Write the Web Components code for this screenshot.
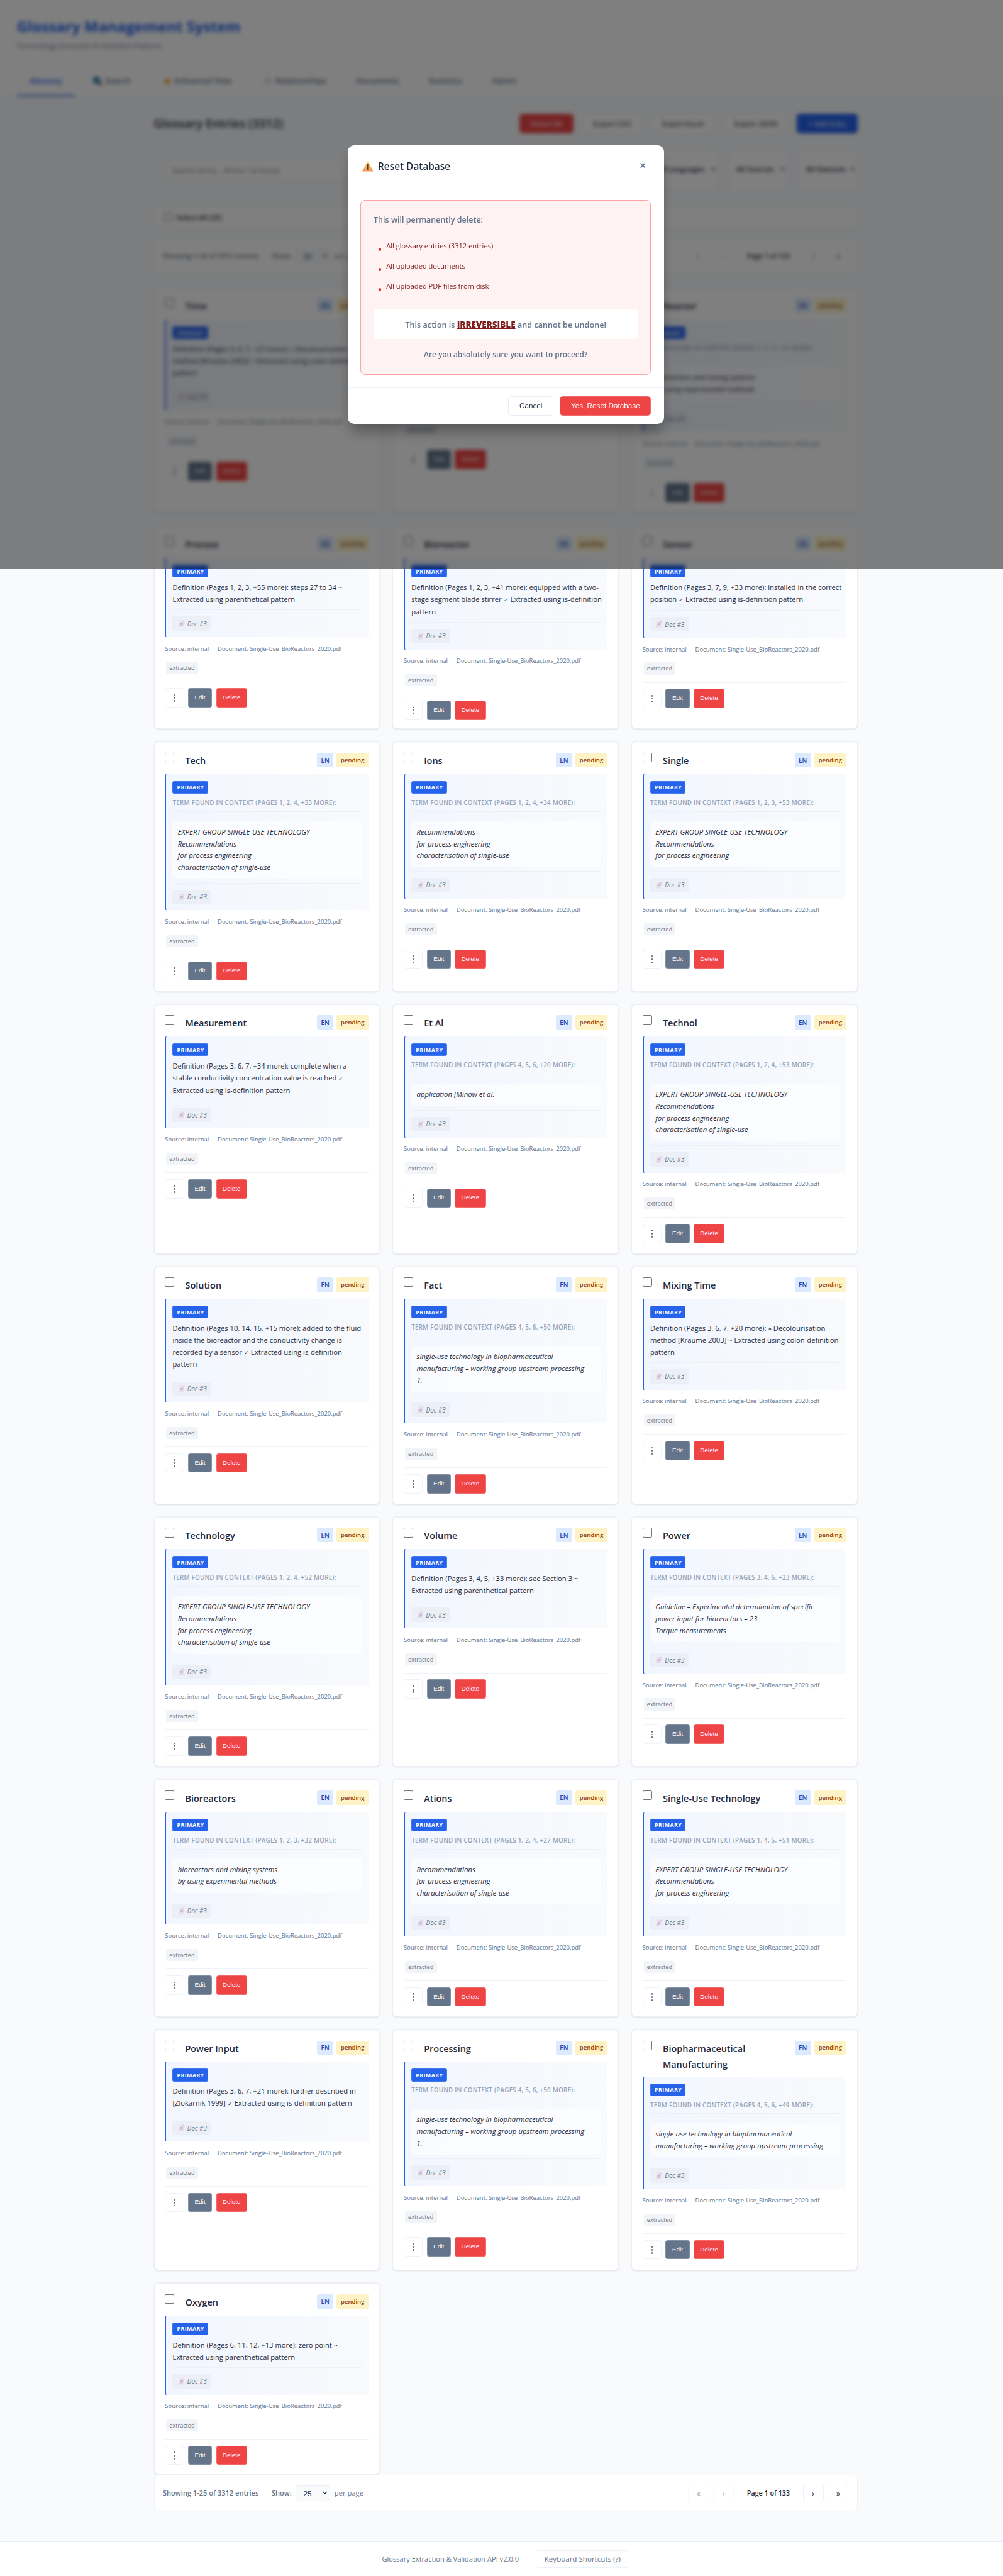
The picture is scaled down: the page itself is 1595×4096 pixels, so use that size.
<!DOCTYPE html>
<html lang="en">
<head>
<meta charset="utf-8">
<title>Glossary Management System</title>
<style>
html,body{margin:0;padding:0;background:#f8fafc}
body{width:1595px;height:4096px;overflow:hidden}
glossary-app{zoom:.83771}
</style>
</head>
<body>
<glossary-app></glossary-app>
<script>
const define = (name, html) => customElements.define(name, class extends HTMLElement {
  connectedCallback() {
    if (this.shadowRoot) return;
    const root = this.attachShadow({ mode: 'open' });
    root.innerHTML = '<style>*{box-sizing:border-box}</style>' + (typeof html === 'function' ? html(this) : html);
  }
});

/* Buttons */
define('app-button', `<style>
:host{display:flex;align-items:center;justify-content:center;box-sizing:border-box;height:37px;padding:0 20px;border-radius:6px;
 font:14px/16px "Liberation Sans",Arial,sans-serif;color:#1e293b;background:#fff;border:1px solid #e9eef8;white-space:nowrap}
:host([kind=danger]){background:#ef4444;color:#fff;border-color:#f26a6a}
:host([kind=primary]){background:#2563eb;color:#fff;border-color:#2563eb}
:host([kind=slate]){background:#64748b;color:#fff;border-color:#8390a3}
:host([size=sm]){height:36.4px;font-size:11.9px;padding:0 11px 2px;border-radius:4px}
</style><slot></slot>`);

define('kebab-button', `<style>
:host{display:flex;flex-direction:column;align-items:center;justify-content:center;gap:2.3px;box-sizing:border-box;width:36px;height:36.4px;
 padding-top:1px;border:1px solid #eef2f9;border-radius:6px;background:#fff}
i{width:3.4px;height:3.4px;border-radius:50%;background:#64748b}
</style><i></i><i></i><i></i>`);

define('check-box', `<style>
:host{display:block;box-sizing:border-box;width:18px;height:18px;border:1px solid #767676;border-radius:2.5px;background:#fff;flex:none}
:host([small]){width:16px;height:16px}</style>`);

define('select-box', `<style>
:host{display:flex;align-items:center;justify-content:space-between;box-sizing:border-box;border:1px solid #e9eef8;border-radius:6px;background:#fff;color:#1e293b;white-space:nowrap}
svg{width:9px;height:7px;flex:none}
</style><span><slot></slot></span><svg viewBox="0 0 9 7"><path d="M1 1.3 4.5 5 8 1.3" fill="none" stroke="currentColor" stroke-width="1.7"/></svg>`);

/* Header with navigation */
define('app-header', `<style>
:host{display:flex;flex-direction:column;justify-content:space-between;box-sizing:border-box;height:184px;padding:28px 32px 0;background:#fff;border-bottom:1px solid #eef2f9}
h1{margin:0;font:700 28.24px/46px "Open Sans",sans-serif;color:#2563eb}
p{margin:3px 0 0;font:13.14px/22px "Open Sans",sans-serif;color:#64748b}
nav{display:flex;gap:8px;height:60px}
a{display:flex;align-items:center;padding:4px 24px 0;font:600 14.9px/24px "Open Sans",sans-serif;color:#64748b;border-bottom:3px solid transparent}
a.on{color:#2563eb;border-color:#2563eb}
a svg{width:17px;height:17px;margin:0 5px}
</style>
<div><h1>Glossary Management System</h1><p>Terminology Extraction &amp; Validation Platform</p></div>
<nav><a class="on">Glossary</a>
<a><svg viewBox="0 0 17 17" style="margin-left:3px;margin-right:6px"><path d="m9 9 7 7" stroke="#5b3a52" stroke-width="4"/><circle cx="6.5" cy="6.5" r="5.5" fill="#2596be" stroke="#285a78" stroke-width="2"/></svg>Search</a>
<a><svg viewBox="0 0 17 17"><path d="m8.5 1 2.3 5 5.2.6-3.9 3.6 1.1 5.3-4.7-2.7-4.7 2.7 1.1-5.3L1 6.600l5.200-.6z" fill="#f59e33"/></svg>Enhanced View</a>
<a><svg viewBox="0 0 17 17"><circle cx="8.500" cy="8.500" r="5" fill="none" stroke="#a8b2c2" stroke-width="2"/></svg>Relationships</a>
<a>Documents</a><a>Statistics</a><a>Admin</a></nav>`);

/* Title row, filters and bulk selection */
define('list-toolbar', `<style>
:host{display:block;font-family:"Open Sans",sans-serif;color:#1e293b}
.top{display:flex;align-items:center;justify-content:space-between;height:37px}
h2{margin:0;font-size:22.44px;line-height:36px;font-weight:600}
.acts{display:flex;gap:16px}
.filters{display:flex;gap:20px;margin-top:29px;height:81px;padding-left:25px;align-items:center}
.search{flex:1;height:34px;display:flex;align-items:center;padding-left:10px;background:#fff;border-radius:6px;font-size:13.66px;color:#757575;margin-right:12px}
select-box{height:81px;width:112px;padding:0 4px 4px 13px;font-size:13.5px;border-radius:8px;font-weight:600}
select-box.l{width:130px}
.bulk{display:flex;align-items:center;gap:8px;margin-top:27px;height:44px;padding-left:18px;background:#fff;border:1px solid #eef2f9;border-radius:8px;font-size:13.46px;font-weight:600}
</style>
<div class="top"><h2>Glossary Entries (3312)</h2><div class="acts"><app-button kind="danger">Reset DB</app-button><app-button>Export CSV</app-button><app-button>Export Excel</app-button><app-button>Export JSON</app-button><app-button kind="primary">+ Add Entry</app-button></div></div>
<div class="filters"><div class="search">Search terms... (Press / to focus)</div><select-box class="l">All Languages</select-box><select-box>All Sources</select-box><select-box>All Statuses</select-box></div>
<div class="bulk"><check-box small></check-box>Select All (25)</div>`);

define('pagination-bar', `<style>
:host{display:flex;flex:none;align-items:center;justify-content:space-between;box-sizing:border-box;height:69px;padding:0 16px;border:1px solid #edf1f8;border-radius:8px;background:#fff;
 font:13.3px/22px "Open Sans",sans-serif;color:#64748b}
.l,.r{display:flex;align-items:center}
b{font-weight:600;font-size:13.2px}
.show{margin-left:24.5px;margin-right:7.5px}
select-box{width:65px;height:29.500px;padding:0 4px 0 13.500px;background:#f8fafc;margin-right:8.5px;font:14px "Liberation Sans",Arial,sans-serif}
.pp{font-size:13.49px}
.r{gap:8px}
.n{display:flex;align-items:center;justify-content:center;box-sizing:border-box;width:39.5px;height:36px;border:1px solid #edf1f8;border-radius:6px;color:#1e293b;font-size:14px;padding-bottom:1px}
.off{opacity:.42}
.p{color:#1e293b;font-size:12.81px;margin:0 16.5px}
</style>
<div class="l"><b>Showing 1-25 of 3312 entries</b><b class="show">Show:</b><select-box>25</select-box><span class="pp">per page</span></div>
<div class="r"><span class="n off">«</span><span class="n off">‹</span><b class="p">Page 1 of 133</b><span class="n">›</span><span class="n">»</span></div>`);

/* One glossary entry; its definition or quoted context goes in the slot */
define('entry-card', el => `<style>
:host{display:flex;flex-direction:column;box-sizing:border-box;min-width:0;padding:20px;background:#fff;border:1px solid #ecf0f6;border-radius:8px;box-shadow:0 1px 3px rgba(15,23,42,.11);
 font-family:"Open Sans",sans-serif;color:#1e293b}
header{display:flex;min-height:32.4px;margin-bottom:8px;align-items:flex-start}
h3{flex:1;margin:0 0 0 20.300px;font-size:17.25px;line-height:30.2px;font-weight:600}
h3.two{margin-bottom:.6px}
.bd{width:61.500px;height:27.200px;display:flex;align-items:center;justify-content:center;border-radius:4px;font-size:11.36px;font-weight:600;background:#fef3c7;color:#92400e;margin-left:6px}
.bd.en{width:31px;background:#dbeafe;color:#1e40af;font-size:11.8px}
.box{padding:13px 12px 12px;border-left:3px solid #2563eb;border-radius:4px;background:linear-gradient(90deg,#f2f6ff,#f8fafc)}
.pr{width:67.500px;height:24.2px;display:flex;align-items:center;justify-content:center;background:#2563eb;border:1px solid #4079ee;border-radius:3px;color:#fff;font-weight:700;font-size:10.6px;letter-spacing:.5px;padding:1px 0 0 1px}
.sep{border-top:1px solid #edf1f6}
.doc{width:72.5px;height:27.2px;display:flex;align-items:center;margin-top:12px;background:#ecf0f6;border-radius:4px;font-style:italic;font-size:11.83px;color:#64748b;padding-left:10px}
.doc svg{width:13px;height:13px;margin-right:5px}
.src{display:flex;gap:16.500px;margin-top:11.300px;height:22px;line-height:22px;font-size:11.35px;color:#64748b;white-space:nowrap}
.tag{align-self:flex-start;margin:13.6px 0 0 2px;height:23px;line-height:23px;padding:0 6.3px;background:#f1f5f9;border-radius:4px;font-size:10.92px;color:#64748b}
.rule{border-top:1px solid #eff2f8;margin:14.3px 0 11.6px}
.acts{display:flex;gap:7.700px}
</style>
<header><check-box></check-box><h3 class="${el.getAttribute('term').includes('|') ? 'two' : ''}">${el.getAttribute('term').replace('|', '<br>')}</h3><span class="bd en">EN</span><span class="bd">pending</span></header>
<div class="box"><div class="pr">PRIMARY</div><slot></slot><div class="sep"></div>
<div class="doc"><svg viewBox="0 0 13 13"><path d="M3.600.5h6.600l2.300 2.600L10.400 12.500H.8L1.200 9h1.300z" fill="#e9dcee"/><path d="m10.200.5 2.300 2.600h-2.300z" fill="#c7b7cf"/><path d="M4.500 5h5.400l-.8 3H3.900z" fill="#c2b5cc"/><path d="M3.300 10h4.500" stroke="#cbbdd4"/></svg>Doc #3</div></div>
<div class="src"><span>Source: internal</span><span>Document: Single-Use_BioReactors_2020.pdf</span></div>
<span class="tag">extracted</span><div class="rule"></div>
<div class="acts"><kebab-button></kebab-button><app-button size="sm" kind="slate" style="width:45.500px">Edit</app-button><app-button size="sm" kind="danger" style="width:59px">Delete</app-button></div>`);

define('entry-definition', `<style>:host{display:block;margin:8.200px 0 7.800px;min-height:44.800px;font:13.42px/22.4px "Open Sans",sans-serif;color:#1e293b;white-space:nowrap}</style><slot></slot>`);

define('entry-context', el => `<style>:host{display:block;margin-bottom:7.700px;white-space:nowrap;font-family:"Open Sans",sans-serif}
.h{margin-top:7px;height:27px;line-height:21px;font-weight:600;font-size:11.75px;letter-spacing:.27px;color:#94a3b8;border-bottom:1px solid #edf1f6}
.q{margin-top:17.700px;padding:10px;border-radius:6px;background:rgba(255,255,255,.6);font-style:italic;font-size:13.6px;line-height:22.4px;color:#1e293b}
</style><div class="h">TERM FOUND IN CONTEXT (PAGES ${el.getAttribute('pages')} MORE):</div><div class="q"><slot></slot></div>`);

define('app-footer', `<style>
:host{display:flex;align-items:center;justify-content:center;gap:32px;box-sizing:border-box;height:66px;padding-left:16px;background:#fff;border-top:1px solid #e9eef7;font:13.25px/22px "Open Sans",sans-serif;color:#64748b}
b{font-weight:400;font-size:13.84px;border:1px solid #edf1f8;border-radius:6px;height:33px;line-height:30px;padding:0 15.500px}
</style><span>Glossary Extraction &amp; Validation API v2.0.0</span><b>Keyboard Shortcuts (?)</b>`);

/* Confirmation dialog */
define('reset-dialog', `<style>
:host{display:block;box-sizing:border-box;width:600px;height:529px;background:#fff;border-radius:12px;box-shadow:0 20px 25px -5px rgba(0,0,0,.3);font-family:"Open Sans",sans-serif;color:#64748b;font-weight:600}
header{display:flex;align-items:center;height:80.500px;padding:2px 35px 0 27.500px;border-bottom:1px solid #eef2f9}
header>svg{width:21px;height:21px}
h2{flex:1;margin:0 0 0 9px;font-size:18.38px;line-height:30px;font-weight:600;color:#1e293b}
.x{width:10px;height:10px;margin-bottom:4px}
.warn{margin:24px 24px;height:331px;border:2px solid #fca5a5;border-radius:8px;background:#fef2f2;padding:24px 24px 0}
.lead{font-size:14.93px;line-height:26px}
ul{list-style:none;margin:17px 0 0;padding:0 0 0 24px;font-weight:400;color:#7f1d1d;font-size:13.26px}
li{height:38px;line-height:38px;display:flex;align-items:center}
li i{width:5.500px;height:5.500px;border-radius:50%;background:#dc2626;margin:13px 9.500px 0 -15px}
.irr{margin-top:24px;height:57.500px;background:#fff;border-radius:6px;display:flex;align-items:center;justify-content:center;font-size:15.11px;white-space:pre;padding-top:2px}
u{font-size:16.09px;font-weight:800;color:#7f1d1d}
.sure{margin-top:16.500px;text-align:center;font-size:14.14px;line-height:26px}
footer{display:flex;justify-content:flex-end;gap:12px;padding:15.500px 24px 0;border-top:1px solid #eef2f9}
</style>
<header><svg viewBox="0 0 21 21"><defs><linearGradient id="g" x2="0" y2="1"><stop stop-color="#ffd84d"/><stop offset="1" stop-color="#f89b5a"/></linearGradient></defs><path d="M10.500 1.500 20 19H1z" fill="url(#g)" stroke="url(#g)" stroke-width="1.500" stroke-linejoin="round"/><path d="M10.500 6.500v7" stroke="#4a3b52" stroke-width="2" stroke-linecap="round"/><circle cx="10.500" cy="16.600" r="1.200" fill="#4a3b52"/></svg><h2>Reset Database</h2><svg class="x" viewBox="0 0 10 10"><path d="m.8.8 8.400 8.400M9.200.8.8 9.200" stroke="#64748b" stroke-width="2"/></svg></header>
<div class="warn"><div class="lead">This will permanently delete:</div>
<ul><li><i></i>All glossary entries (3312 entries)</li><li><i></i>All uploaded documents</li><li><i></i>All uploaded PDF files from disk</li></ul>
<div class="irr">This action is <u>IRREVERSIBLE</u> and cannot be undone!</div><div class="sure">Are you absolutely sure you want to proceed?</div></div>
<footer><app-button>Cancel</app-button><app-button kind="danger">Yes, Reset Database</app-button></footer>`);

define('modal-overlay', `<style>
:host{position:absolute;left:0;top:0;width:1904px;height:1080px;padding-left:16px;box-sizing:border-box;display:flex;align-items:center;justify-content:center;background:rgba(0,0,0,.5);backdrop-filter:blur(4px)}
</style><slot></slot>`);

/* Each entry: term, lines of text, and the page list when the text is a quoted context */
const R = 'Recommendations', F = 'for process engineering', C = 'characterisation of single-use', X = 'EXPERT GROUP SINGLE-USE TECHNOLOGY', S = 'single-use technology in biopharmaceutical', M = 'manufacturing – working group upstream processing';
const ENTRIES = [
 ['Time', ['Definition (Pages 3, 6, 7, +37 more): » Decolourisation', 'method [Kraume 2003] ~ Extracted using colon-definition', 'pattern']],
 ['', []],
 ['Reactor', ['bioreactors and mixing systems', 'by using experimental methods'], '1, 2, 3, +41'],
 ['Process', ['Definition (Pages 1, 2, 3, +55 more): steps 27 to 34 ~', 'Extracted using parenthetical pattern']],
 ['Bioreactor', ['Definition (Pages 1, 2, 3, +41 more): equipped with a two-', 'stage segment blade stirrer ✓ Extracted using is-definition', 'pattern']],
 ['Sensor', ['Definition (Pages 3, 7, 9, +33 more): installed in the correct', 'position ✓ Extracted using is-definition pattern']],
 ['Tech', [X, R, F, C], '1, 2, 4, +53'],
 ['Ions', [R, F, C], '1, 2, 4, +34'],
 ['Single', [X, R, F], '1, 2, 3, +53'],
 ['Measurement', ['Definition (Pages 3, 6, 7, +34 more): complete when a', 'stable conductivity concentration value is reached ✓', 'Extracted using is-definition pattern']],
 ['Et Al', ['application [Minow et al.'], '4, 5, 6, +20'],
 ['Technol', [X, R, F, C], '1, 2, 4, +53'],
 ['Solution', ['Definition (Pages 10, 14, 16, +15 more): added to the fluid', 'inside the bioreactor and the conductivity change is', 'recorded by a sensor ✓ Extracted using is-definition', 'pattern']],
 ['Fact', [S, M, '1.'], '4, 5, 6, +50'],
 ['Mixing Time', ['Definition (Pages 3, 6, 7, +20 more): » Decolourisation', 'method [Kraume 2003] ~ Extracted using colon-definition', 'pattern']],
 ['Technology', [X, R, F, C], '1, 2, 4, +52'],
 ['Volume', ['Definition (Pages 3, 4, 5, +33 more): see Section 3 ~', 'Extracted using parenthetical pattern']],
 ['Power', ['Guideline – Experimental determination of specific', 'power input for bioreactors – 23', 'Torque measurements'], '3, 4, 6, +23'],
 ['Bioreactors', ['bioreactors and mixing systems', 'by using experimental methods'], '1, 2, 3, +32'],
 ['Ations', [R, F, C], '1, 2, 4, +27'],
 ['Single-Use Technology', [X, R, F], '1, 4, 5, +51'],
 ['Power Input', ['Definition (Pages 3, 6, 7, +21 more): further described in', '[Zlokarnik 1999] ✓ Extracted using is-definition pattern']],
 ['Processing', [S, M, '1.'], '4, 5, 6, +50'],
 ['Biopharmaceutical|Manufacturing', [S, M], '4, 5, 6, +49'],
 ['Oxygen', ['Definition (Pages 6, 11, 12, +13 more): zero point ~', 'Extracted using parenthetical pattern']]
];
const text = lines => lines.join('<br>').replace('✓', '<span style="font-size:11.3px">✓</span>');

define('glossary-app', () => `<style>
:host{display:block;position:relative;width:1904px;height:4890px;background:#f8fafc}
main{width:1336px;margin:0 0 0 292px;padding:32px 0 0;height:4639.500px;display:flex;flex-direction:column}
pagination-bar{margin-top:.5px}
pagination-bar.t{margin:17.500px 0 24.600px}
.grid{display:grid;flex:none;grid-template-columns:repeat(3,minmax(0,1fr));gap:24px;grid-template-rows:428.500px 386.400px 474.200px 473.700px 451.300px 474.500px 450.500px 457.600px 363.900px}
</style>
<app-header></app-header>
<main><list-toolbar></list-toolbar><pagination-bar class="t"></pagination-bar>
<div class="grid">${ENTRIES.map(([t, lines, p]) => `<entry-card term="${t}">${p ? `<entry-context pages="${p}">${text(lines)}</entry-context>` : `<entry-definition>${text(lines)}</entry-definition>`}</entry-card>`).join('')}</div>
<pagination-bar></pagination-bar></main>
<app-footer></app-footer>
<modal-overlay><reset-dialog></reset-dialog></modal-overlay>`);
</script>
</body>
</html>
